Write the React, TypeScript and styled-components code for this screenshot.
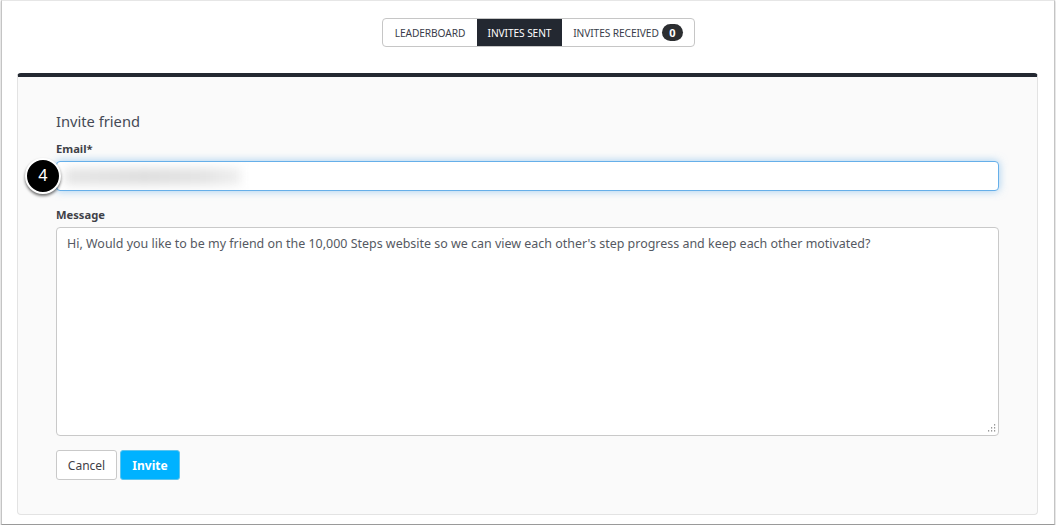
import React from 'react'
import styled, { createGlobalStyle } from 'styled-components'

const GlobalStyle = createGlobalStyle`
  html, body {
    margin: 0;
    padding: 0;
    background: #fff;
  }
  body {
    font-family: 'Noto Sans', 'Open Sans', sans-serif;
    color: #3a3d45;
  }
`

const Frame = styled.div`
  box-sizing: border-box;
  width: 1054px;
  height: 525px;
  margin-left: 1px;
  padding: 18px 16px 9px 15px;
  background: #fff;
  border: 1px solid #e6e6e6;
  border-left-color: #c4c4c4;
  border-right-color: #c4c4c4;
  border-bottom-color: #9a9a9a;
  box-shadow: 0 1px 2px rgba(0, 0, 0, 0.3);
  display: flex;
  flex-direction: column;
  align-items: stretch;
`

const Tabs = styled.nav`
  align-self: center;
  display: flex;
  height: 29px;
  margin-left: 22px;
  margin-top: -1px;
  margin-bottom: 26px;
  box-sizing: border-box;
  border: 1px solid #c6c6c6;
  border-radius: 4px;
  background: #fff;
  overflow: hidden;
`

const Tab = styled.div<{ $active?: boolean; $width: number }>`
  width: ${(p) => p.$width}px;
  box-sizing: border-box;
  display: flex;
  align-items: center;
  justify-content: center;
  gap: 3px;
  font-size: 10.2px;
  letter-spacing: -0.1px;
  color: ${(p) => (p.$active ? '#fff' : '#3a3d4a')};
  background: ${(p) => (p.$active ? '#232831' : 'transparent')};
`

const Badge = styled.span`
  display: inline-flex;
  align-items: center;
  justify-content: center;
  width: 21px;
  height: 17px;
  border-radius: 9px;
  background: #2c2e31;
  color: #fff;
  font-size: 11px;
  font-weight: 700;
`

const Card = styled.section`
  flex: 1;
  box-sizing: border-box;
  padding: 34px 38px 0 38px;
  background: #fafafa;
  border: 1px solid #e3e3e3;
  border-top: 4px solid #232831;
  border-radius: 4px;
`

const Title = styled.h2`
  margin: 0 0 10px;
  font-size: 14.7px;
  line-height: 20px;
  font-weight: 400;
  color: #454a55;
`

const Field = styled.div`
  position: relative;
  display: flex;
  flex-direction: column;
  margin-bottom: 16px;
`

const Label = styled.label`
  font-size: 11.2px;
  line-height: 16px;
  font-weight: 700;
  color: #3f4147;
  margin-bottom: 4px;
`

const EmailInput = styled.div`
  position: relative;
  box-sizing: border-box;
  height: 30px;
  background: #fff;
  border: 1px solid #66afe9;
  border-radius: 4px;
  box-shadow: 0 0 8px rgba(102, 175, 233, 0.6);
  overflow: hidden;
`

const BlurredValue = styled.div`
  position: absolute;
  left: 8px;
  top: 6px;
  width: 176px;
  height: 17px;
  background: linear-gradient(90deg, #e6e6e6, #dedede 45%, #e4e4e4 80%, #f0f0f0);
  filter: blur(5px);
`

const Step = styled.div`
  position: absolute;
  left: -31px;
  top: 17px;
  box-sizing: border-box;
  width: 36px;
  height: 36px;
  border-radius: 50%;
  background: #000;
  border: 2px solid #fff;
  box-shadow: 0 2px 3px rgba(0, 0, 0, 0.55);
  color: #fff;
  font-family: 'Liberation Sans', sans-serif;
  font-size: 17px;
  display: flex;
  align-items: center;
  justify-content: center;
  z-index: 2;
`

const MessageBox = styled.textarea`
  box-sizing: border-box;
  height: 209px;
  padding: 7px 10px;
  background: #fff;
  border: 1px solid #c9c9c9;
  border-radius: 4px;
  font-family: inherit;
  font-size: 12.46px;
  line-height: 18px;
  color: #555962;
  outline: none;
  resize: none;
`

const Grip = styled.svg`
  position: absolute;
  right: 3px;
  bottom: 3px;
  width: 9px;
  height: 9px;
`

const Actions = styled.div`
  display: flex;
  gap: 3px;
  margin-top: -2px;
`

const Button = styled.button<{ $primary?: boolean; $width: number }>`
  box-sizing: border-box;
  width: ${(p) => p.$width}px;
  height: 30px;
  border-radius: 3px;
  border: 1px solid ${(p) => (p.$primary ? '#5cc4ee' : '#c9c9c9')};
  background: ${(p) => (p.$primary ? '#00b2ff' : '#fff')};
  color: ${(p) => (p.$primary ? '#fff' : '#3f4147')};
  font-family: inherit;
  font-size: 12px;
  font-weight: ${(p) => (p.$primary ? 700 : 400)};
  padding: 0;
`

const gripDots = [
  [7, 0],
  [7, 3],
  [4, 3],
  [7, 6],
  [4, 6],
  [1, 6],
]

const App: React.FC = () => {
  return (
    <>
      <GlobalStyle />
      <Frame>
        <Tabs>
          <Tab $width={94}>LEADERBOARD</Tab>
          <Tab $active $width={85}>INVITES SENT</Tab>
          <Tab $width={132}>
            INVITES RECEIVED <Badge>0</Badge>
          </Tab>
        </Tabs>
        <Card>
          <Title>Invite friend</Title>
          <Field>
            <Label>Email*</Label>
            <EmailInput>
              <BlurredValue />
            </EmailInput>
            <Step>4</Step>
          </Field>
          <Field>
            <Label>Message</Label>
            <MessageBox
              readOnly
              defaultValue="Hi, Would you like to be my friend on the 10,000 Steps website so we can view each other's step progress and keep each other motivated?"
            />
            <Grip viewBox="0 0 9 9">
              {gripDots.map(([x, y]) => (
                <rect key={`${x}-${y}`} x={x} y={y} width="1.2" height="1.6" fill="#9a9a9a" />
              ))}
            </Grip>
          </Field>
          <Actions>
            <Button $width={61}>Cancel</Button>
            <Button $primary $width={60}>Invite</Button>
          </Actions>
        </Card>
      </Frame>
    </>
  )
}

export default App
